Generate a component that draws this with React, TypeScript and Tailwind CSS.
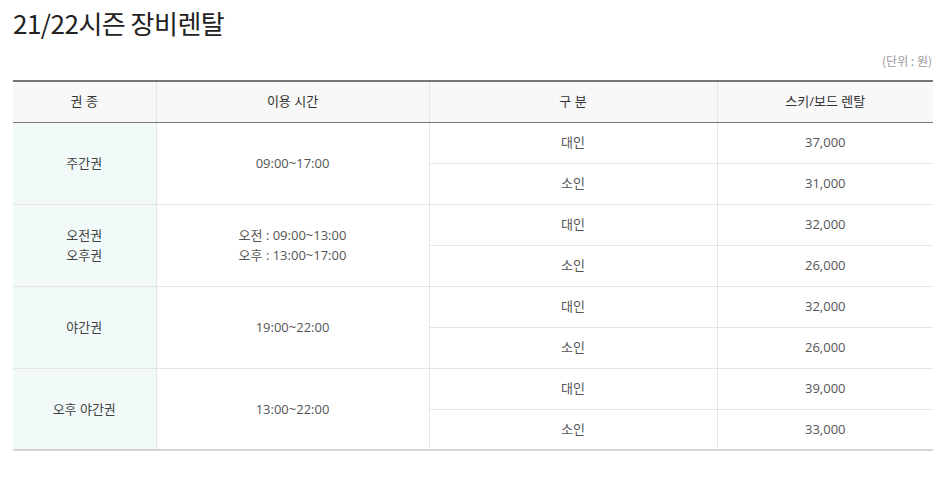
import React from 'react';

interface Plan {
  name: string[];
  time: string[];
  adult: string;
  child: string;
}

const plans: Plan[] = [
  { name: ['주간권'], time: ['09:00~17:00'], adult: '37,000', child: '31,000' },
  { name: ['오전권', '오후권'], time: ['오전 : 09:00~13:00', '오후 : 13:00~17:00'], adult: '32,000', child: '26,000' },
  { name: ['야간권'], time: ['19:00~22:00'], adult: '32,000', child: '26,000' },
  { name: ['오후 야간권'], time: ['13:00~22:00'], adult: '39,000', child: '33,000' },
];

const cell = 'h-[41px] p-0 text-center align-middle border-b border-[#e5e5e5] font-normal';

const App: React.FC = () => {
  return (
    <div
      className="w-[946px] min-h-[478px] bg-white px-[13px] pt-[4px]"
      style={{ fontFamily: '"Noto Sans CJK KR", "Noto Sans", sans-serif' }}
    >
      <h1 className="text-[26px] leading-[38px] text-[#222] font-normal tracking-[-0.5px]">21/22시즌 장비렌탈</h1>
      <p className="mt-[10px] text-right text-[12px] leading-[18px] text-[#999] pr-[1px]">(단위 : 원)</p>
      <table
        className="mt-[10px] w-full border-collapse table-fixed border-t-2 border-t-[#777] border-b-2 border-b-[#d4d4d4] text-[13px] text-[#555]"
        style={{ fontFamily: '"Open Sans", "Noto Sans CJK KR", sans-serif' }}
      >
        <colgroup>
          <col className="w-[143px]" />
          <col className="w-[273px]" />
          <col className="w-[288px]" />
          <col />
        </colgroup>
        <thead>
          <tr className="bg-[#f8f8f8] text-[#333]">
            <th className="h-[41px] p-0 font-normal border-b border-b-[#777]">권 종</th>
            <th className="h-[41px] p-0 font-normal border-b border-b-[#777] border-l border-l-[#e5e5e5]">이용 시간</th>
            <th className="h-[41px] p-0 font-normal border-b border-b-[#777] border-l border-l-[#e5e5e5]">구 분</th>
            <th className="h-[41px] p-0 font-normal border-b border-b-[#777] border-l border-l-[#e5e5e5]">스키/보드 렌탈</th>
          </tr>
        </thead>
        <tbody>
          {plans.map((p, i) => (
            <React.Fragment key={i}>
              <tr>
                <td rowSpan={2} className={`${cell} bg-[#f2faf9] text-[#444] leading-[20px]`}>
                  {p.name.map((n) => (
                    <div key={n}>{n}</div>
                  ))}
                </td>
                <td rowSpan={2} className={`${cell} border-l leading-[20px]`}>
                  {p.time.map((t) => (
                    <div key={t}>{t}</div>
                  ))}
                </td>
                <td className={`${cell} border-l`}>대인</td>
                <td className={`${cell} border-l`}>{p.adult}</td>
              </tr>
              <tr>
                <td className={`${cell} border-l`}>소인</td>
                <td className={`${cell} border-l`}>{p.child}</td>
              </tr>
            </React.Fragment>
          ))}
        </tbody>
      </table>
    </div>
  );
};

export default App;
